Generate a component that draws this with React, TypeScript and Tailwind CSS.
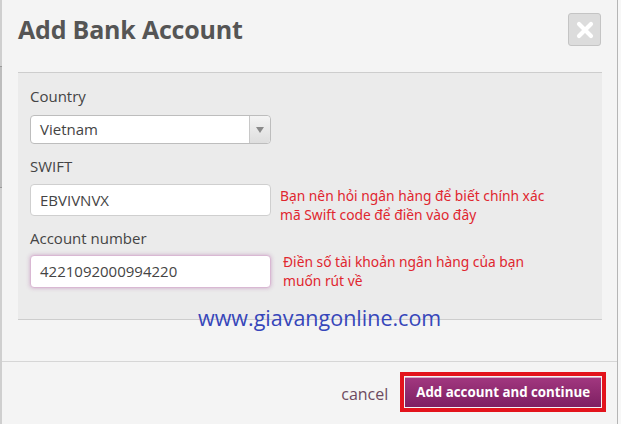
import React from "react";

const sans = { fontFamily: '"Open Sans", "Noto Sans", sans-serif' };
const hint = { fontFamily: '"Noto Sans", "Open Sans", sans-serif' };

function CloseButton() {
  return (
    <div className="w-[33px] h-[33px] rounded-[3px] border border-[#c4c4c4] bg-[#dcdcdc] flex items-center justify-center">
      <svg width="18" height="18" viewBox="0 0 18 18">
        <path d="M3 3 L15 15 M15 3 L3 15" stroke="#ffffff" strokeWidth="4.2" strokeLinecap="round" />
      </svg>
    </div>
  );
}

function SelectBox() {
  return (
    <div className="w-[241px] h-[29px] rounded-[4px] border border-[#bdbdbd] bg-white flex">
      <div className="flex-1 flex items-center pl-[9px] text-[15px] text-[#444]">Vietnam</div>
      <div className="w-[21px] border-l border-[#c8c8c8] rounded-r-[4px] bg-gradient-to-b from-[#f4f4f4] to-[#dedede] flex items-center justify-center">
        <svg width="8" height="6" viewBox="0 0 8 6">
          <path d="M0 0 H8 L4 6 Z" fill="#8a8a8a" />
        </svg>
      </div>
    </div>
  );
}

export default function App() {
  return (
    <div className="w-[621px] h-[424px] flex overflow-hidden bg-[#f1f1f1]" style={sans}>
      <div className="w-[2px] bg-[#cfcfcf] flex flex-col">
        <div className="h-[66px]" />
        <div className="h-[1px] bg-[#9a9a9a]" />
        <div className="h-[120px] bg-[#bdbdbd]" />
        <div className="h-[1px] bg-[#9a9a9a]" />
      </div>
      <div className="w-[616px] bg-[#f4f4f4] border-r border-[#b5b5b5] flex flex-col">
        <div className="flex items-start justify-between pl-[16px] pr-[16px] pt-[13px] h-[72px]">
          <h1 className="text-[25px] leading-[33px] font-bold text-[#555] tracking-[-0.2px]">Add Bank Account</h1>
          <CloseButton />
        </div>
        <div className="ml-[16px] mr-[15px] h-[248px] bg-[#ebebeb] border-t border-b border-[#cdcdcd] relative">
          <div className="pl-[12px] pt-[13px] flex flex-col">
            <label className="text-[15px] leading-[20px] text-[#444]">Country</label>
            <div className="mt-[9px]">
              <SelectBox />
            </div>
            <label className="mt-[12px] text-[15px] leading-[20px] text-[#444]">SWIFT</label>
            <div className="mt-[8px] h-[32px] flex items-start">
              <div className="w-[241px] h-[32px] shrink-0 rounded-[4px] border border-[#cfcfcf] bg-white flex items-center pl-[9px] text-[15px] text-[#444]">
                EBVIVNVX
              </div>
              <div className="ml-[9px] mt-[2px] text-[13.8px] leading-[19px] text-[#e0262f]" style={hint}>
                Bạn nên hỏi ngân hàng để biết chính xác
                <br />
                mã Swift code để điền vào đây
              </div>
            </div>
            <label className="mt-[12px] text-[15px] leading-[20px] text-[#444]">Account number</label>
            <div className="mt-[7px] h-[33px] flex items-start">
              <div className="w-[241px] h-[33px] shrink-0 rounded-[4px] border border-[#d9b8d3] bg-white shadow-[0_0_4px_rgba(170,90,160,0.45)] flex items-center pl-[9px] text-[15px] text-[#444]">
                4221092000994220
              </div>
              <div className="ml-[12px] -mt-[3px] text-[13.8px] leading-[19px] text-[#e0262f]" style={hint}>
                Điền số tài khoản ngân hàng của bạn
                <br />
                muốn rút về
              </div>
            </div>
          </div>
          <div className="absolute left-[180px] top-[233px] text-[21.5px] leading-[24px] text-[#3646ba]">
            www.giavangonline.com
          </div>
        </div>
        <div className="h-[41px]" />
        <div className="h-[1px] bg-[#d6d6d6]" />
        <div className="flex items-start justify-end pr-[11px] pt-[10px]">
          <span className="mt-[10px] mr-[12px] text-[16px] text-[#6d4a60]">cancel</span>
          <div className="flex border-[4px] border-[#e3131c] p-[1px] bg-[#f4f4f4]">
            <button className="h-[30px] px-[11px] bg-gradient-to-b from-[#a1377f] to-[#7e1f62] border-t border-[#d9a6c8] text-white font-bold text-[13.3px] whitespace-nowrap">
              Add account and continue
            </button>
          </div>
        </div>
      </div>
      <div className="flex-1 bg-[#f7f7f7]" />
    </div>
  );
}
